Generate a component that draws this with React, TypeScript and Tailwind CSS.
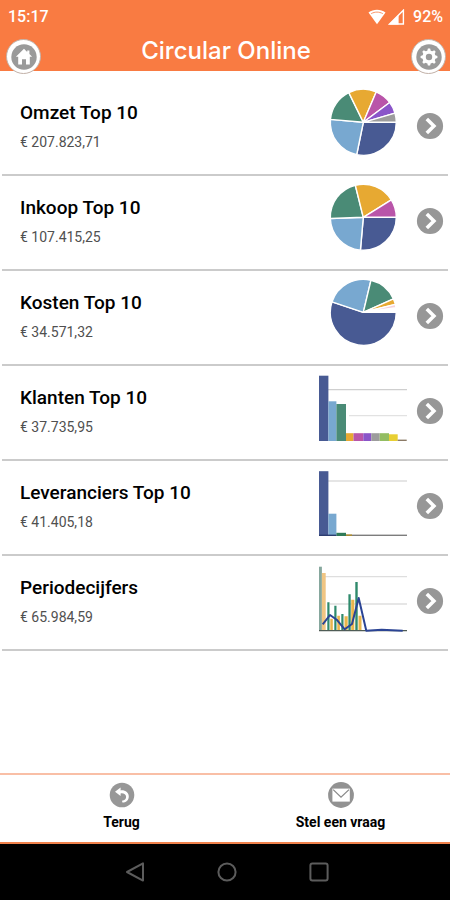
import type { ReactNode } from "react"

type Slice = { to: number; color: string }
type Bar = { x: number; w: number; top: number; color: string }

const NAVY = "#485a93"
const SKY = "#78a8d0"
const GREEN = "#4a8b76"
const AMBER = "#e7a932"
const PINK = "#b955a9"
const PURPLE = "#8a55c9"
const GRAY = "#9c9c9c"

// Angles are in degrees, clockwise from three o'clock
function PieChart({ slices }: { slices: Slice[] }) {
  const cx = 45.3
  const cy = 33.3
  const r = 33
  const point = (deg: number) => {
    const rad = (deg * Math.PI) / 180
    return `${(cx + r * Math.cos(rad)).toFixed(2)} ${(cy + r * Math.sin(rad)).toFixed(2)}`
  }

  return (
    <svg width="90" height="68" viewBox="0 0 90 68" aria-hidden="true">
      {slices.map((slice, i) => {
        const from = i === 0 ? 0 : slices[i - 1].to
        const large = slice.to - from > 180 ? 1 : 0
        return (
          <path
            key={i}
            d={`M${cx} ${cy}L${point(from)}A${r} ${r} 0 ${large} 1 ${point(slice.to)}Z`}
            fill={slice.color}
            stroke="#fff"
            strokeWidth="1.4"
            strokeLinejoin="round"
          />
        )
      })}
    </svg>
  )
}

function BarChart({ bars, children }: { bars: Bar[]; children?: ReactNode }) {
  return (
    <svg width="90" height="68" viewBox="0 0 90 68" aria-hidden="true">
      {children}
      {bars.map((bar, i) => (
        <rect key={i} x={bar.x} y={bar.top} width={bar.w} height={67 - bar.top} fill={bar.color} />
      ))}
    </svg>
  )
}

function CustomersChart() {
  return (
    <BarChart
      bars={[
        { x: 1, w: 9.4, top: 1.7, color: NAVY },
        { x: 10.4, w: 8, top: 27.3, color: SKY },
        { x: 18.4, w: 9.6, top: 30, color: GREEN },
        { x: 28, w: 7.5, top: 59.2, color: AMBER },
        { x: 35.5, w: 9.8, top: 59.2, color: PINK },
        { x: 45.3, w: 8, top: 59.2, color: PURPLE },
        { x: 53.3, w: 8.4, top: 59.2, color: GRAY },
        { x: 61.7, w: 9.3, top: 59.2, color: "#93bd62" },
        { x: 71, w: 8.7, top: 60.3, color: "#e8cf33" },
        { x: 79.7, w: 9, top: 65.6, color: "#8b7a66" },
      ]}
    >
      <path d="M10 15.7H89" stroke="#cfcfcf" strokeWidth="1.2" />
      <path d="M31 41.7H89" stroke="#e2e2e2" strokeWidth="1.2" />
    </BarChart>
  )
}

function SuppliersChart() {
  return (
    <BarChart
      bars={[
        { x: 1, w: 9.4, top: 2.2, color: NAVY },
        { x: 10.4, w: 8, top: 44.7, color: SKY },
        { x: 18.4, w: 9.6, top: 63.8, color: "#2f7a58" },
        { x: 28, w: 6, top: 65.3, color: "#a98a35" },
        { x: 34, w: 55, top: 65.6, color: "#7d7d7d" },
        { x: 1, w: 17.4, top: 65.6, color: "#2c3d70" },
      ]}
    >
      <path d="M10 12H89" stroke="#dcdcdc" strokeWidth="1.4" />
    </BarChart>
  )
}

function PeriodChart() {
  return (
    <svg width="90" height="68" viewBox="0 0 90 68" aria-hidden="true">
      <path d="M4 12.7H89M12 40H89" stroke="#dedede" strokeWidth="1.3" />
      <path d="M1 2.7H3.9V66.7H1Z" fill="#86a79d" />
      <path d="M3.9 9H7.7V66.7H3.9Z" fill="#f0c583" />
      <path
        d="M9.3 38.3h2.2v28.4h-2.2zM16.3 41.7h2.2v25h-2.2zM23.3 50h2.2v16.7h-2.2zM30.4 30.3h2.3v36.4h-2.3zM37.3 18h2.4v48.7h-2.4z"
        fill="#2f8a6c"
      />
      <path
        d="M12.3 54.7h2.5v12h-2.5zM19.3 51.7h2.6v15h-2.6zM26.5 52.3h3.2v14.4h-3.2zM33.2 35.7h3.1v31h-3.1zM40.5 51.7h3v15h-3z"
        fill="#eab54c"
      />
      <path d="M1 66.7H89" stroke="#4f5c56" strokeWidth="1.2" />
      <path
        d="M4.7 60.3L12 51L18.7 55.7L26.7 65.3L34 60L40.7 34L48.3 66.7L63.7 65.8L84.7 66.7"
        fill="none"
        stroke="#2b4494"
        strokeWidth="2"
        strokeLinejoin="round"
      />
    </svg>
  )
}

const items = [
  {
    title: "Omzet Top 10",
    amount: "€ 207.823,71",
    chart: (
      <PieChart
        slices={[
          { to: 101.5, color: NAVY },
          { to: 185, color: SKY },
          { to: 244, color: GREEN },
          { to: 293, color: AMBER },
          { to: 323, color: PINK },
          { to: 344, color: PURPLE },
          { to: 360, color: GRAY },
        ]}
      />
    ),
  },
  {
    title: "Inkoop Top 10",
    amount: "€ 107.415,25",
    chart: (
      <PieChart
        slices={[
          { to: 95, color: NAVY },
          { to: 178, color: SKY },
          { to: 256, color: GREEN },
          { to: 328, color: AMBER },
          { to: 360, color: PINK },
        ]}
      />
    ),
  },
  {
    title: "Kosten Top 10",
    amount: "€ 34.571,32",
    chart: (
      <PieChart
        slices={[
          { to: 198.5, color: NAVY },
          { to: 283.5, color: SKY },
          { to: 336, color: GREEN },
          { to: 346, color: AMBER },
          { to: 352, color: "#f3d3dd" },
        ]}
      />
    ),
  },
  { title: "Klanten Top 10", amount: "€ 37.735,95", chart: <CustomersChart /> },
  { title: "Leveranciers Top 10", amount: "€ 41.405,18", chart: <SuppliersChart /> },
  { title: "Periodecijfers", amount: "€ 65.984,59", chart: <PeriodChart /> },
]

function StatusBar() {
  return (
    <div className="flex h-[34px] items-center justify-between pl-2 pr-[7px] text-base font-medium">
      <span>15:17</span>
      <div className="flex items-center">
        <svg width="18" height="16" viewBox="0 0 18 16" aria-hidden="true">
          <path d="M0.5 3.6C5.5-0.2 12.5-0.2 17.5 3.6L9 15.2Z" fill="#fff" />
          <path d="M3.2 4.6C7 2.6 11 2.6 14.8 4.6" fill="none" stroke="#f97b42" strokeWidth="1" opacity="0.8" />
        </svg>
        <svg className="ml-0.5" width="17" height="16" viewBox="0 0 17 16" aria-hidden="true">
          <path d="M1.6 15L15.4 1.2V15Z" fill="none" stroke="#fff" strokeWidth="1.4" />
          <path d="M1 15.4L10.6 5.8V15.4Z" fill="#fff" />
        </svg>
        <span className="ml-2">92%</span>
      </div>
    </div>
  )
}

function RoundButton({ label, children }: { label: string; children: ReactNode }) {
  return (
    <button
      type="button"
      aria-label={label}
      className="relative z-10 mt-[5px] flex h-[35px] w-[35px] shrink-0 items-center justify-center rounded-full border border-[#c2b1a8] bg-white"
    >
      <svg width="26" height="26" viewBox="0 0 26 26" aria-hidden="true">
        <circle cx="13" cy="13" r="12.7" fill="#9a9a9a" />
        {children}
      </svg>
    </button>
  )
}

export default function App() {
  return (
    <div className="flex min-h-screen flex-col bg-white font-['Roboto',sans-serif] text-black">
      <header className="bg-[#f97b42] text-white">
        <StatusBar />
        <div className="flex h-[37px] items-start justify-between pl-[6px] pr-1">
          <RoundButton label="Home">
            <path d="M13 4.8L4.9 12.7H7.2V20.6H11V15.2H15V20.6H18.8V12.7H21.1L18.4 10V6.6H16.2V7.9Z" fill="#fff" />
          </RoundButton>
          <h1 className="font-['Inter',sans-serif] text-2xl leading-[34px] font-medium">Circular Online</h1>
          <RoundButton label="Instellingen">
            <g fill="#fff">
              <circle cx="13" cy="13" r="6.6" />
              {[0, 45, 90, 135, 180, 225, 270, 315].map((deg) => (
                <path key={deg} d="M11.1 7.5L11.9 4.6H14.1L14.9 7.5Z" transform={`rotate(${deg} 13 13)`} />
              ))}
            </g>
            <circle cx="13" cy="13" r="3.2" fill="#9a9a9a" />
          </RoundButton>
        </div>
      </header>

      <main className="flex-1 px-0.5 pt-[10px]">
        <ul>
          {items.map((item) => (
            <li key={item.title} className="border-b-2 border-[#cbcbcb]">
              <a href="#" className="flex h-[93px] items-start pl-[18px] pr-1">
                <div className="flex-1 pt-5">
                  <h2 className="text-[19px] leading-6 font-medium">{item.title}</h2>
                  <p className="mt-[7px] text-sm leading-5 text-[#505050]">{item.amount}</p>
                </div>
                <div className="pt-2">{item.chart}</div>
                <svg className="mt-[31px] ml-2" width="28" height="28" viewBox="0 0 28 28" aria-hidden="true">
                  <circle cx="14" cy="14" r="13.1" fill="#979797" />
                  <path d="M10.8 7L17.9 14L10.8 21" fill="none" stroke="#fff" strokeWidth="3.6" />
                </svg>
              </a>
            </li>
          ))}
        </ul>
      </main>

      <footer>
        <div className="grid h-[71px] grid-cols-2 items-start border-y-2 border-t-[#f9bfa6] border-b-[#f0824c] pt-[7px] pl-3 text-sm leading-5 font-bold">
          <button type="button" className="flex flex-col items-center gap-1">
            <svg width="26" height="26" viewBox="0 0 26 26" aria-hidden="true">
              <circle cx="13" cy="13" r="12.3" fill="#979797" />
              <path d="M6 9.8L11.6 5.6V8.4C16 7.8 20 10.6 19.8 14.8C19.6 18.4 17 20.6 13.4 20.6L13 18.8C15.6 18.6 17.2 17 17.1 14.8C17 12.2 14.6 11 11.6 11.4V14Z" fill="#fff" />
            </svg>
            Terug
          </button>
          <button type="button" className="flex flex-col items-center gap-1">
            <svg width="26" height="26" viewBox="0 0 26 26" aria-hidden="true">
              <circle cx="13" cy="13" r="12.9" fill="#929292" />
              <rect x="4.4" y="6.6" width="17.4" height="13" fill="#fff" />
              <path d="M5.2 7.6L13 15.2L21 7.6" fill="none" stroke="#8a8a8a" strokeWidth="1.3" />
            </svg>
            Stel een vraag
          </button>
        </div>
        <nav className="flex h-14 items-center justify-center gap-[72px] bg-black pl-1" aria-label="Systeem">
          <button type="button" aria-label="Vorige">
            <svg width="20" height="20" viewBox="0 0 20 20" fill="none" stroke="#5c5c5c" strokeWidth="2">
              <path d="M18 1.4V18.6L2 10Z" strokeLinejoin="round" />
            </svg>
          </button>
          <button type="button" aria-label="Start">
            <svg width="20" height="20" viewBox="0 0 20 20" fill="none" stroke="#5c5c5c" strokeWidth="2">
              <circle cx="10" cy="10" r="8.6" />
            </svg>
          </button>
          <button type="button" aria-label="Recent">
            <svg width="20" height="20" viewBox="0 0 20 20" fill="none" stroke="#5c5c5c" strokeWidth="2">
              <rect x="1.4" y="1.4" width="17.2" height="17.2" rx="2" />
            </svg>
          </button>
        </nav>
      </footer>
    </div>
  )
}
